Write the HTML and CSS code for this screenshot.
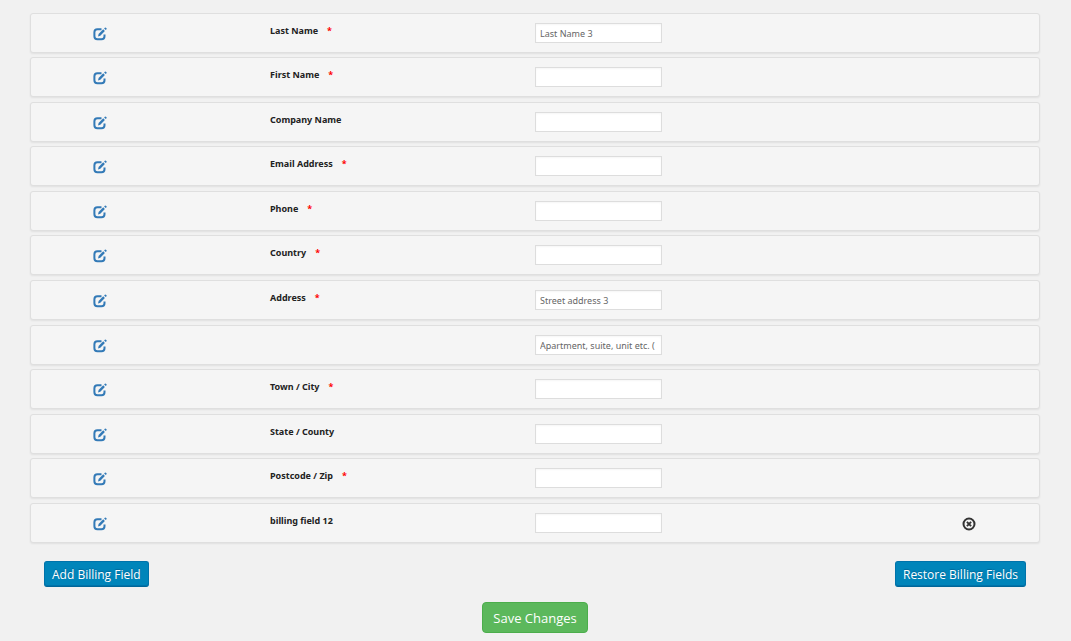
FILE: index.html
```html
<!DOCTYPE html>
<html lang="en">
<head>
<meta charset="utf-8">
<title>Billing Fields</title>
<link rel="stylesheet" href="styles.css">
</head>
<body>
<svg class="sprite" aria-hidden="true">
  <symbol id="edit" viewBox="0 0 14 14">
    <path d="M8.500 2.200H4.400Q1.400 2.200 1.400 5.200v4.100q0 3 3 3h4.100q3 0 3-3V7.600" fill="none" stroke="currentColor" stroke-width="2"/>
    <path d="M5 9.500l.6-2.500L10.200 2.300l1.700 1.700-4.600 4.700z" fill="currentColor"/>
    <path d="M11.100 1.500l.8-.8q.5-.4 1 0l.6.6q.4.500 0 1l-.8.8z" fill="currentColor"/>
  </symbol>
  <symbol id="remove" viewBox="0 0 14 14">
    <circle cx="7" cy="7" r="5.500" fill="none" stroke="currentColor" stroke-width="2"/>
    <path d="M4.900 4.900l4.200 4.200M9.100 4.900l-4.200 4.200" stroke="currentColor" stroke-width="1.900"/>
  </symbol>
</svg>
<form class="billing">
  <ul class="fields">
    <li class="field"><button type="button" class="icon edit" aria-label="Edit Last Name"><svg><use href="#edit"/></svg></button><label for="f1">Last Name<span class="req">*</span></label><input id="f1" type="text" placeholder="Last Name 3"></li>
    <li class="field"><button type="button" class="icon edit" aria-label="Edit First Name"><svg><use href="#edit"/></svg></button><label for="f2">First Name<span class="req">*</span></label><input id="f2" type="text"></li>
    <li class="field"><button type="button" class="icon edit" aria-label="Edit Company Name"><svg><use href="#edit"/></svg></button><label for="f3">Company Name</label><input id="f3" type="text"></li>
    <li class="field"><button type="button" class="icon edit" aria-label="Edit Email Address"><svg><use href="#edit"/></svg></button><label for="f4">Email Address<span class="req">*</span></label><input id="f4" type="text"></li>
    <li class="field"><button type="button" class="icon edit" aria-label="Edit Phone"><svg><use href="#edit"/></svg></button><label for="f5">Phone<span class="req">*</span></label><input id="f5" type="text"></li>
    <li class="field"><button type="button" class="icon edit" aria-label="Edit Country"><svg><use href="#edit"/></svg></button><label for="f6">Country<span class="req">*</span></label><input id="f6" type="text"></li>
    <li class="field"><button type="button" class="icon edit" aria-label="Edit Address"><svg><use href="#edit"/></svg></button><label for="f7">Address<span class="req">*</span></label><input id="f7" type="text" placeholder="Street address 3"></li>
    <li class="field"><button type="button" class="icon edit" aria-label="Edit address line"><svg><use href="#edit"/></svg></button><label for="f8"></label><input id="f8" type="text" placeholder="Apartment, suite, unit etc. ("></li>
    <li class="field"><button type="button" class="icon edit" aria-label="Edit Town / City"><svg><use href="#edit"/></svg></button><label for="f9">Town / City<span class="req">*</span></label><input id="f9" type="text"></li>
    <li class="field"><button type="button" class="icon edit" aria-label="Edit State / County"><svg><use href="#edit"/></svg></button><label for="f10">State / County</label><input id="f10" type="text"></li>
    <li class="field"><button type="button" class="icon edit" aria-label="Edit Postcode / Zip"><svg><use href="#edit"/></svg></button><label for="f11">Postcode / Zip<span class="req">*</span></label><input id="f11" type="text"></li>
    <li class="field"><button type="button" class="icon edit" aria-label="Edit billing field 12"><svg><use href="#edit"/></svg></button><label for="f12">billing field 12</label><input id="f12" type="text"><button type="button" class="icon remove" aria-label="Remove billing field 12"><svg><use href="#remove"/></svg></button></li>
  </ul>
  <div class="actions">
    <button type="button" class="primary">Add Billing Field</button>
    <button type="button" class="primary">Restore Billing Fields</button>
  </div>
  <div class="submit"><button type="submit" class="save">Save Changes</button></div>
</form>
</body>
</html>
```
FILE: styles.css
```css
* { box-sizing: border-box; }
body {
  margin: 0;
  background: #f1f1f1;
  color: #333;
  font-family: "Open Sans", "Noto Sans", sans-serif;
}
.sprite { position: absolute; width: 0; height: 0; }
.billing { padding: 13px 31px 8px 30px; }
.fields {
  margin: 0;
  padding: 0;
  list-style: none;
  font-family: "Noto Sans", "Open Sans", sans-serif;
  font-size: 9px;
}
.field {
  display: grid;
  grid-template-columns: 239fr 265fr 364fr 140fr;
  align-items: start;
  height: 40px;
  margin-top: 5px;
  border: 1px solid #dfdfdf;
  border-radius: 3px;
  background: #f5f5f5;
  box-shadow: 0 1px 2px rgba(0, 0, 0, .07);
}
.field:first-child { margin-top: 0; }
.field:nth-child(-2n+6),
.field:nth-child(2n+9) { margin-top: 4px; }
.icon {
  width: 14px;
  height: 14px;
  margin: 13px 0 0;
  padding: 0;
  border: 0;
  background: none;
  cursor: pointer;
}
.icon svg { display: block; width: 14px; height: 14px; }
.edit { margin-left: 62px; color: #337ab7; }
.remove { justify-self: center; color: #333; }
.field label {
  padding-top: 9px;
  line-height: 16px;
  font-weight: 700;
  color: #222;
}
.req { margin-left: 9px; color: #f00; }
.field input {
  width: 127px;
  height: 20px;
  margin: 9px 0 0;
  padding: 0 4px;
  border: 1px solid #ddd;
  border-radius: 0;
  background: #fff;
  box-shadow: inset 0 1px 2px rgba(0, 0, 0, .04);
  color: #555;
  font: inherit;
}
.field input::placeholder { color: #666; }
.actions {
  display: flex;
  justify-content: space-between;
  padding: 18px 14px 0;
}
.primary, .save {
  font-family: inherit;
  color: #fff;
  cursor: pointer;
}
.primary {
  height: 26px;
  padding: 0 7px;
  border: 1px solid #0073aa;
  border-bottom-color: #006799;
  border-radius: 3px;
  background: #0085ba;
  box-shadow: inset 0 -1px 0 #0073aa;
  font-size: 12px;
  text-shadow: 0 -1px 1px #006799;
}
.submit { display: flex; justify-content: center; padding-top: 15px; }
.save {
  height: 31px;
  padding: 0 10px;
  border: 1px solid #4cae4c;
  border-radius: 4px;
  background: #5cb85c;
  font-size: 13px;
}
```
